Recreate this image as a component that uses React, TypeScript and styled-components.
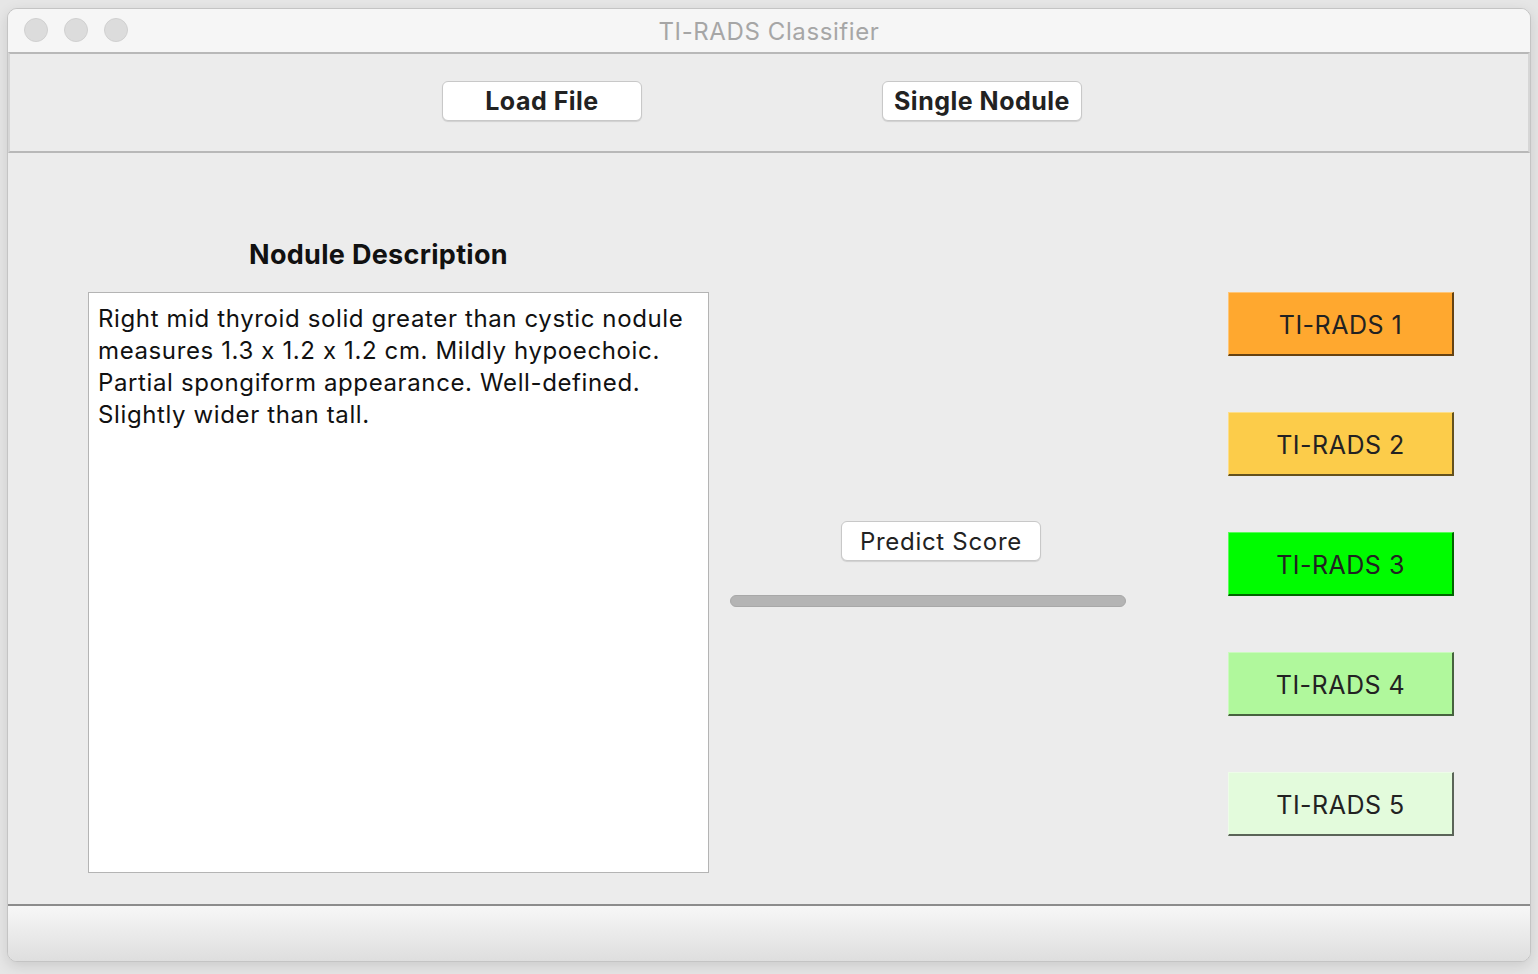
import styled, { createGlobalStyle } from 'styled-components'

const GlobalStyle = createGlobalStyle`
  html, body {
    margin: 0;
    padding: 0;
    background: #e6e6e6;
    font-family: Inter, "Noto Sans", "Liberation Sans", sans-serif;
    font-feature-settings: "calt" 0;
  }
`

const Page = styled.div`
  width: 1538px;
  height: 974px;
  padding: 8px 0 0 7px;
  box-sizing: border-box;
`

const Window = styled.div`
  width: 1524px;
  height: 954px;
  display: flex;
  flex-direction: column;
  border: 1px solid #c4c4c4;
  border-radius: 10px;
  overflow: hidden;
  box-sizing: border-box;
  background: #ececec;
  box-shadow: 0 4px 14px rgba(0, 0, 0, 0.12);
`

const TitleBar = styled.div`
  position: relative;
  height: 43px;
  flex: 0 0 43px;
  display: flex;
  align-items: center;
  justify-content: center;
  background: #f6f6f6;
  color: #a6a6a6;
  font-size: 24px;
  letter-spacing: 0.6px;
  padding-top: 2px;
  box-sizing: border-box;
`

const Lights = styled.div`
  position: absolute;
  left: 16px;
  top: 9px;
  display: flex;
  gap: 16px;
`

const Light = styled.span`
  width: 24px;
  height: 24px;
  border-radius: 50%;
  background: #dcdcdc;
  border: 1px solid #d0d0d0;
  box-sizing: border-box;
`

const Toolbar = styled.div`
  height: 101px;
  flex: 0 0 101px;
  box-sizing: border-box;
  border: 2px solid #b8b8b8;
  border-left-color: #d6d6d6;
  border-right-color: #d6d6d6;
  display: flex;
  align-items: flex-start;
  padding: 27px 0 0 432px;
  gap: 240px;
`

const MacButton = styled.button<{ $bold?: boolean }>`
  width: 200px;
  height: 40px;
  background: #fff;
  border: 1px solid #c8c8c8;
  border-radius: 6px;
  box-shadow: 0 1px 1px rgba(0, 0, 0, 0.12);
  font-family: inherit;
  font-feature-settings: "calt" 0;
  font-size: ${p => (p.$bold ? 25 : 24)}px;
  letter-spacing: ${p => (p.$bold ? 0.5 : 0.7)}px;
  font-weight: ${p => (p.$bold ? 700 : 400)};
  color: #222;
  padding: 0;
`

const Main = styled.div`
  flex: 1;
  display: flex;
  padding: 0 0 0 80px;
`

const LeftCol = styled.div`
  width: 621px;
  display: flex;
  flex-direction: column;
  align-items: center;
`

const Heading = styled.div`
  margin-top: 86px;
  height: 32px;
  line-height: 32px;
  font-size: 27px;
  letter-spacing: 0.3px;
  font-weight: 700;
  color: #111;
  margin-left: -40px;
`

const TextBox = styled.div`
  margin-top: 21px;
  width: 621px;
  height: 581px;
  box-sizing: border-box;
  background: #fff;
  border: 1px solid #b4b4b4;
  padding: 10px 9px;
  font-size: 24px;
  letter-spacing: 0.62px;
  line-height: 32px;
  color: #111;
`

const MiddleCol = styled.div`
  width: 396px;
  margin-left: 21px;
  display: flex;
  flex-direction: column;
  align-items: center;
  padding-top: 368px;
`

const PredictButton = styled(MacButton)`
  margin-left: 26px;
`

const Progress = styled.div`
  margin-top: 34px;
  width: 396px;
  height: 12px;
  box-sizing: border-box;
  border-radius: 6px;
  background: #b4b4b4;
  border: 1px solid #a8a8a8;
`

const RightCol = styled.div`
  margin-left: 102px;
  padding-top: 139px;
  display: flex;
  flex-direction: column;
  gap: 56px;
`

const RadsButton = styled.div<{ $bg: string }>`
  width: 226px;
  height: 64px;
  box-sizing: border-box;
  background: ${p => p.$bg};
  border-top: 1px solid rgba(255, 255, 255, 0.35);
  border-left: 1px solid rgba(255, 255, 255, 0.35);
  border-right: 2px solid rgba(0, 0, 0, 0.6);
  border-bottom: 2px solid rgba(0, 0, 0, 0.6);
  display: flex;
  align-items: center;
  justify-content: center;
  padding-top: 3px;
  font-size: 25px;
  letter-spacing: 0.5px;
  color: #222;
`

const Footer = styled.div`
  height: 55px;
  flex: 0 0 55px;
  border-top: 2px solid #8c8c8c;
  background: linear-gradient(#f7f7f7, #dedede);
`

const scores = [
  { label: 'TI-RADS 1', color: '#ffa82f' },
  { label: 'TI-RADS 2', color: '#fccc4a' },
  { label: 'TI-RADS 3', color: '#00fc00' },
  { label: 'TI-RADS 4', color: '#b0f89c' },
  { label: 'TI-RADS 5', color: '#e3fbdc' },
]

export default function App() {
  return (
    <Page>
      <GlobalStyle />
      <Window>
        <TitleBar>
          <Lights>
            <Light />
            <Light />
            <Light />
          </Lights>
          TI-RADS Classifier
        </TitleBar>
        <Toolbar>
          <MacButton $bold>Load File</MacButton>
          <MacButton $bold>Single Nodule</MacButton>
        </Toolbar>
        <Main>
          <LeftCol>
            <Heading>Nodule Description</Heading>
            <TextBox>
              Right mid thyroid solid greater than cystic nodule measures 1.3 x 1.2 x 1.2 cm. Mildly
              hypoechoic. Partial spongiform appearance. Well-defined. Slightly wider than tall.
            </TextBox>
          </LeftCol>
          <MiddleCol>
            <PredictButton>Predict Score</PredictButton>
            <Progress />
          </MiddleCol>
          <RightCol>
            {scores.map(s => (
              <RadsButton key={s.label} $bg={s.color}>
                {s.label}
              </RadsButton>
            ))}
          </RightCol>
        </Main>
        <Footer />
      </Window>
    </Page>
  )
}
